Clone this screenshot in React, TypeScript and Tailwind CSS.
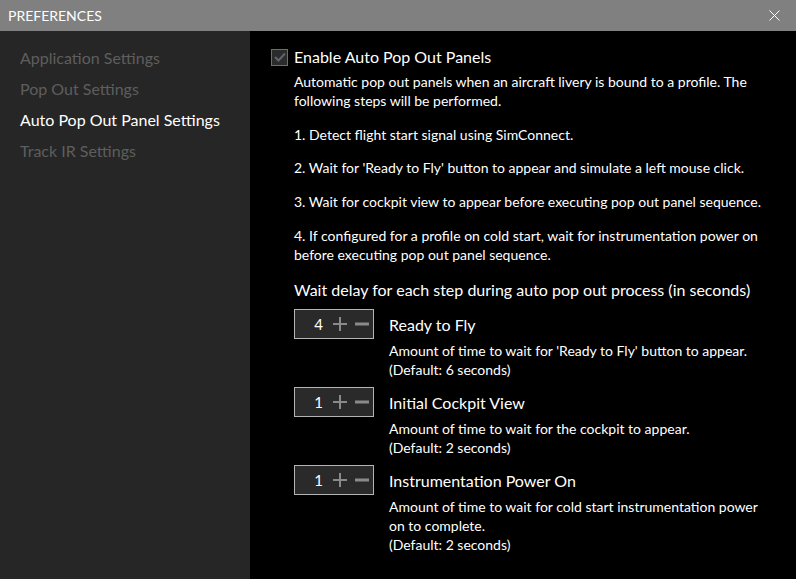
import React from 'react';

const font = "font-['Lato','Noto_Sans',sans-serif]";

const navItems = [
    { label: 'Application Settings', active: false },
    { label: 'Pop Out Settings', active: false },
    { label: 'Auto Pop Out Panel Settings', active: true },
    { label: 'Track IR Settings', active: false },
];

const steps = [
    ['1. Detect flight start signal using SimConnect.'],
    ["2. Wait for 'Ready to Fly' button to appear and simulate a left mouse click."],
    ['3. Wait for cockpit view to appear before executing pop out panel sequence.'],
    [
        '4. If configured for a profile on cold start, wait for instrumentation power on',
        'before executing pop out panel sequence.',
    ],
];

const delays = [
    {
        value: 4,
        title: 'Ready to Fly',
        lines: ["Amount of time to wait for 'Ready to Fly' button to appear.", '(Default: 6 seconds)'],
    },
    {
        value: 1,
        title: 'Initial Cockpit View',
        lines: ['Amount of time to wait for the cockpit to appear.', '(Default: 2 seconds)'],
    },
    {
        value: 1,
        title: 'Instrumentation Power On',
        lines: [
            'Amount of time to wait for cold start instrumentation power',
            'on to complete.',
            '(Default: 2 seconds)',
        ],
    },
];

const Stepper: React.FC<{ value: number }> = ({ value }) => (
    <div className="flex h-[30px] w-[80px] shrink-0 items-center border border-[#b4b4b4] bg-[#2a2a2a]">
        <span className="w-[28px] text-right text-[15px] leading-none text-white">{value}</span>
        <svg width="14" height="14" viewBox="0 0 14 14" className="ml-[10px]">
            <path d="M0 7h14M7 0v14" stroke="#8a8a8a" strokeWidth="2" />
        </svg>
        <svg width="14" height="14" viewBox="0 0 14 14" className="ml-[8px]">
            <path d="M0 7h14" stroke="#8a8a8a" strokeWidth="3" />
        </svg>
    </div>
);

export default function App() {
    return (
        <div className={`flex h-[579px] w-[796px] flex-col overflow-hidden bg-black ${font}`}>
            {/* title bar */}
            <div className="flex h-[31px] shrink-0 items-center justify-between bg-[#808080] pl-[8px] pr-[16px]">
                <span className="text-[14px] text-white">PREFERENCES</span>
                <svg width="11" height="11" viewBox="0 0 11 11">
                    <path d="M0.5 0.5l10 10M10.5 0.5l-10 10" stroke="#ffffff" strokeWidth="1" />
                </svg>
            </div>

            <div className="flex flex-1">
                {/* sidebar */}
                <div className="w-[250px] shrink-0 bg-[#262626] pt-[11px]">
                    {navItems.map((item) => (
                        <div
                            key={item.label}
                            className={`flex h-[31px] items-center pl-[20px] text-[16px] ${item.active ? 'text-white' : 'text-[#5e5e5e]'}`}
                        >
                            {item.label}
                        </div>
                    ))}
                </div>

                {/* content */}
                <div className="flex-1 pl-[21px] pt-[16px] text-white">
                    <div className="flex h-[20px] items-center">
                        <div className="flex h-[17px] w-[17px] items-center justify-center border border-[#6e6e6e] bg-[#2b2b2b]">
                            <svg width="12" height="10" viewBox="0 0 12 10">
                                <path d="M1 5l3.5 3.5L11 1.5" stroke="#5c6570" strokeWidth="2" fill="none" />
                            </svg>
                        </div>
                        <span className="ml-[6px] text-[16px]">Enable Auto Pop Out Panels</span>
                    </div>

                    <div className="pl-[23px] text-[14px] leading-[19px]">
                        <p className="mt-[5px]">
                            Automatic pop out panels when an aircraft livery is bound to a profile. The
                            <br />
                            following steps will be performed.
                        </p>
                        {steps.map((lines, i) => (
                            <p key={i} className={i === 1 ? 'mt-[14px]' : 'mt-[15px]'}>
                                {lines.map((l, j) => (
                                    <React.Fragment key={j}>
                                        {j > 0 && <br />}
                                        {l}
                                    </React.Fragment>
                                ))}
                            </p>
                        ))}

                        <p className="mt-[15px] text-[16px] leading-[21px]">
                            Wait delay for each step during auto pop out process (in seconds)
                        </p>

                        <div className="mt-[9px] flex flex-col gap-[8px]">
                            {delays.map((d) => (
                                <div key={d.title} className="flex">
                                    <Stepper value={d.value} />
                                    <div className="ml-[15px]">
                                        <div className="flex h-[30px] items-center text-[16px]">{d.title}</div>
                                        <div className="mt-[2px]">
                                            {d.lines.map((l) => (
                                                <div key={l}>{l}</div>
                                            ))}
                                        </div>
                                    </div>
                                </div>
                            ))}
                        </div>
                    </div>
                </div>
            </div>
        </div>
    );
}
